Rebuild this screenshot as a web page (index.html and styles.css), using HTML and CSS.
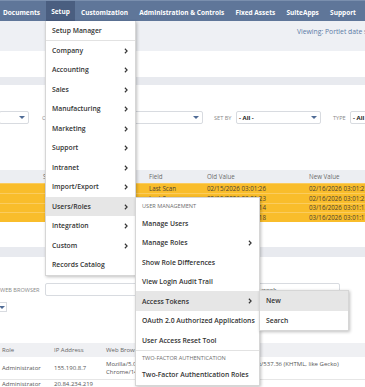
FILE: index.html
```html
<!DOCTYPE html>
<html>
<head>
<meta charset="utf-8">
<link rel="stylesheet" href="styles.css">
</head>
<body>
<div class="page">
  <nav class="topnav">
    <span class="tab">Documents</span>
    <span class="tab active">Setup</span>
    <span class="tab">Customization</span>
    <span class="tab">Administration &amp; Controls</span>
    <span class="tab">Fixed Assets</span>
    <span class="tab">SuiteApps</span>
    <span class="tab">Support</span>
  </nav>
  <div class="subhead"><span class="viewing">Viewing: Portlet date set by</span></div>
  <div class="band band-a"></div>

  <div class="filters">
    <div class="select w-a"><span class="val"></span><i class="arrow"></i></div>
    <span class="flabel l-c">CREATED BY</span>
    <div class="select w-b"><span class="val"></span><i class="arrow"></i></div>
    <span class="flabel l-set">SET BY</span>
    <div class="select w-c"><span class="val">- All -</span><i class="arrow"></i></div>
    <span class="flabel l-type">TYPE</span>
    <div class="select w-d"><span class="val">- All -</span><i class="arrow"></i></div>
  </div>

  <div class="grid1 head">
    <span></span><span>Set By</span><span>Field</span><span>Old Value</span><span>New Value</span>
  </div>
  <div class="grid1 hl">
    <span></span><span></span><span>Last Scan</span><span>02/15/2026 03:01:26</span><span>02/16/2026 03:01:27</span>
  </div>
  <div class="grid1 hl">
    <span></span><span></span><span>Last Scan</span><span>02/15/2026 03:01:23</span><span>02/16/2026 03:01:25</span>
  </div>
  <div class="grid1 hl">
    <span></span><span></span><span>Last Scan</span><span>03/15/2026 03:01:14</span><span>03/16/2026 03:01:13</span>
  </div>
  <div class="grid1 hl">
    <span></span><span></span><span>Last Scan</span><span>03/15/2026 03:01:18</span><span>03/16/2026 03:01:17</span>
  </div>

  <div class="band band-b"></div>

  <div class="inputs">
    <span class="flabel l-web">WEB BROWSER</span>
    <div class="input i-a"></div>
    <div class="input i-b"><span class="val2">this week</span></div>
  </div>
  <div class="minisel"><i class="arrow"></i></div>

  <div class="grid2 head2">
    <span>Role</span><span>IP Address</span><span>Web Browser</span>
  </div>
  <div class="grid2 row2 sep">
    <span>Administrator</span><span>155.190.8.7</span>
    <span class="ua"><span class="ual">Mozilla/5.0 (Windows NT 10.0; Win64; x64) AppleWebKit/537.36 (KHTML, like Gecko)</span><span class="ual">Chrome/145.0.0.0 Safari/537.36</span></span>
  </div>
  <div class="grid2 row2">
    <span>Administrator</span><span>20.84.234.219</span><span></span>
  </div>

  <div class="menu m1">
    <div class="mi first">Setup Manager</div>
    <div class="mi">Company<svg class="chev" viewBox="0 0 5 8"><path d="M1 1 L4 4 L1 7"/></svg></div>
    <div class="mi">Accounting<svg class="chev" viewBox="0 0 5 8"><path d="M1 1 L4 4 L1 7"/></svg></div>
    <div class="mi">Sales<svg class="chev" viewBox="0 0 5 8"><path d="M1 1 L4 4 L1 7"/></svg></div>
    <div class="mi">Manufacturing<svg class="chev" viewBox="0 0 5 8"><path d="M1 1 L4 4 L1 7"/></svg></div>
    <div class="mi">Marketing<svg class="chev" viewBox="0 0 5 8"><path d="M1 1 L4 4 L1 7"/></svg></div>
    <div class="mi">Support<svg class="chev" viewBox="0 0 5 8"><path d="M1 1 L4 4 L1 7"/></svg></div>
    <div class="mi">Intranet<svg class="chev" viewBox="0 0 5 8"><path d="M1 1 L4 4 L1 7"/></svg></div>
    <div class="mi">Import/Export<svg class="chev" viewBox="0 0 5 8"><path d="M1 1 L4 4 L1 7"/></svg></div>
    <div class="mi on">Users/Roles<svg class="chev" viewBox="0 0 5 8"><path d="M1 1 L4 4 L1 7"/></svg></div>
    <div class="mi">Integration<svg class="chev" viewBox="0 0 5 8"><path d="M1 1 L4 4 L1 7"/></svg></div>
    <div class="mi">Custom<svg class="chev" viewBox="0 0 5 8"><path d="M1 1 L4 4 L1 7"/></svg></div>
    <div class="mi">Records Catalog</div>
  </div>

  <div class="menu m2">
    <div class="mh">USER MANAGEMENT</div>
    <div class="mi">Manage Users</div>
    <div class="mi">Manage Roles<svg class="chev" viewBox="0 0 5 8"><path d="M1 1 L4 4 L1 7"/></svg></div>
    <div class="mi">Show Role Differences</div>
    <div class="mi">View Login Audit Trail</div>
    <div class="mi on">Access Tokens<svg class="chev" viewBox="0 0 5 8"><path d="M1 1 L4 4 L1 7"/></svg></div>
    <div class="mi">OAuth 2.0 Authorized Applications</div>
    <div class="mi">User Access Reset Tool</div>
    <div class="mh sepa">TWO-FACTOR AUTHENTICATION</div>
    <div class="mi">Two-Factor Authentication Roles</div>
  </div>

  <div class="menu m3">
    <div class="mi on">New</div>
    <div class="mi">Search</div>
  </div>
</div>
</body>
</html>
```

FILE: styles.css
```css
* { box-sizing: border-box; }
html, body { margin: 0; padding: 0; background: #fff; }
body { font-family: "Open Sans", "DejaVu Sans", sans-serif; color: #333; overflow: hidden; }
.page { position: relative; width: 365px; height: 387px; overflow: hidden; }

.topnav { display: flex; height: 21px; background: #5f7699; white-space: nowrap; padding-top: 2px; border-top: 1px solid #7a8fae; }
.tab { display: flex; align-items: center; padding: 0 5.6px; color: #fff; font-weight: 700; font-size: 6.5px; }
.tab:first-child { padding-left: 3px; }
.tab.active { background: #4a5e80; margin-top: -2px; }

.subhead { height: 30px; background: #eef0f4; padding: 6px 0 0 297px; white-space: nowrap; }
.viewing { font-size: 6.8px; color: #5b7ba6; line-height: 10px; display: block; }

.band { background: #e8eaef; }
.band-a { height: 8px; margin-top: 26px; }
.band-b { height: 10px; margin-top: 25px; }

.filters { display: flex; align-items: center; height: 13px; margin-top: 26px; white-space: nowrap; }
.select { position: relative; height: 13px; border: 1px solid #d8dbe0; border-radius: 2px; background: #fff; display: flex; align-items: center; padding-left: 2px; flex: none; }
.select .val { font-size: 6px; font-weight: 700; color: #222; }
.arrow { position: absolute; right: 3px; top: 4px; width: 0; height: 0; border-left: 3px solid transparent; border-right: 3px solid transparent; border-top: 3px solid #4f6b95; }
.w-a { width: 30px; margin-left: -1px; }
.w-b { width: 123px; margin-left: 3px; }
.w-c { width: 85px; margin-left: 5px; }
.w-d { width: 40px; margin-left: 5px; }
.flabel { font-size: 5.6px; color: #8a8a8a; flex: none; }
.l-c { margin-left: 13px; width: 35px; }
.l-set { margin-left: 11px; width: 17px; }
.l-type { margin-left: 12px; width: 12px; }

.grid1 { display: grid; grid-template-columns: 41px 104px 58px 102px 1fr; white-space: nowrap; font-size: 6.2px; align-items: center; }
.grid1 > span { padding-left: 4px; overflow: hidden; }
.grid1 > span:nth-child(2) { padding-left: 2px; }
.head { margin-top: 46px; height: 13px; background: #eceef2; color: #6a6a6a; }
.hl { height: 9.75px; background: #f9bd2b; color: #4a4232; border-top: 1px solid #fbcc5e; }

.inputs { display: flex; align-items: center; height: 13px; margin-top: 26px; white-space: nowrap; }
.l-web { width: 45px; }
.input { height: 13px; border: 1px solid #d8dbe0; border-radius: 2px; background: #fff; flex: none; display: flex; align-items: center; }
.i-a { width: 150px; }
.i-b { width: 95px; margin-left: 50px; padding-left: 4px; }
.val2 { font-size: 6px; color: #333; }
.minisel { position: relative; width: 8px; height: 10px; margin-top: 6px; margin-left: -1px; border: 1px solid #d8dbe0; border-left: none; }
.minisel .arrow { right: 1px; top: 3px; }

.grid2 { display: grid; grid-template-columns: 52px 52px 1fr; white-space: nowrap; font-size: 6px; }
.grid2 > span { padding-left: 2px; }
.head2 { margin-top: 31px; height: 14px; background: #eff0f3; color: #666; align-items: center; }
.row2 { color: #555; align-items: center; }
.row2.sep { height: 23px; border-bottom: 1px solid #e6e6e6; }
.row2:last-child { height: 14px; }
.ua { display: flex; flex-direction: column; line-height: 8px; }
.ual { display: block; }

.menu { position: absolute; background: #fff; border: 1px solid #d6d6d6; box-shadow: 1px 1px 3px rgba(0,0,0,0.25); }
.mi { position: relative; height: 19.5px; display: flex; align-items: center; padding-left: 6px; font-size: 6.8px; font-weight: 600; color: #333; white-space: nowrap; }
.mi.on { background: #e6e6e6; }
.mi.first { border-bottom: 1px solid #e2e2e2; }
.chev { position: absolute; right: 7px; top: 7px; width: 4px; height: 6px; fill: none; stroke: #333; stroke-width: 1.5; }
.mh { height: 15.25px; display: flex; align-items: center; padding-left: 6px; font-size: 5.6px; color: #6e6e6e; white-space: nowrap; }
.mh.sepa { border-top: 1px solid #e2e2e2; }

.m1 { left: 45px; top: 21px; width: 91px; border-top: none; }
.m2 { left: 135px; top: 197px; width: 125px; }
.m3 { left: 259px; top: 290px; width: 90px; }
```
